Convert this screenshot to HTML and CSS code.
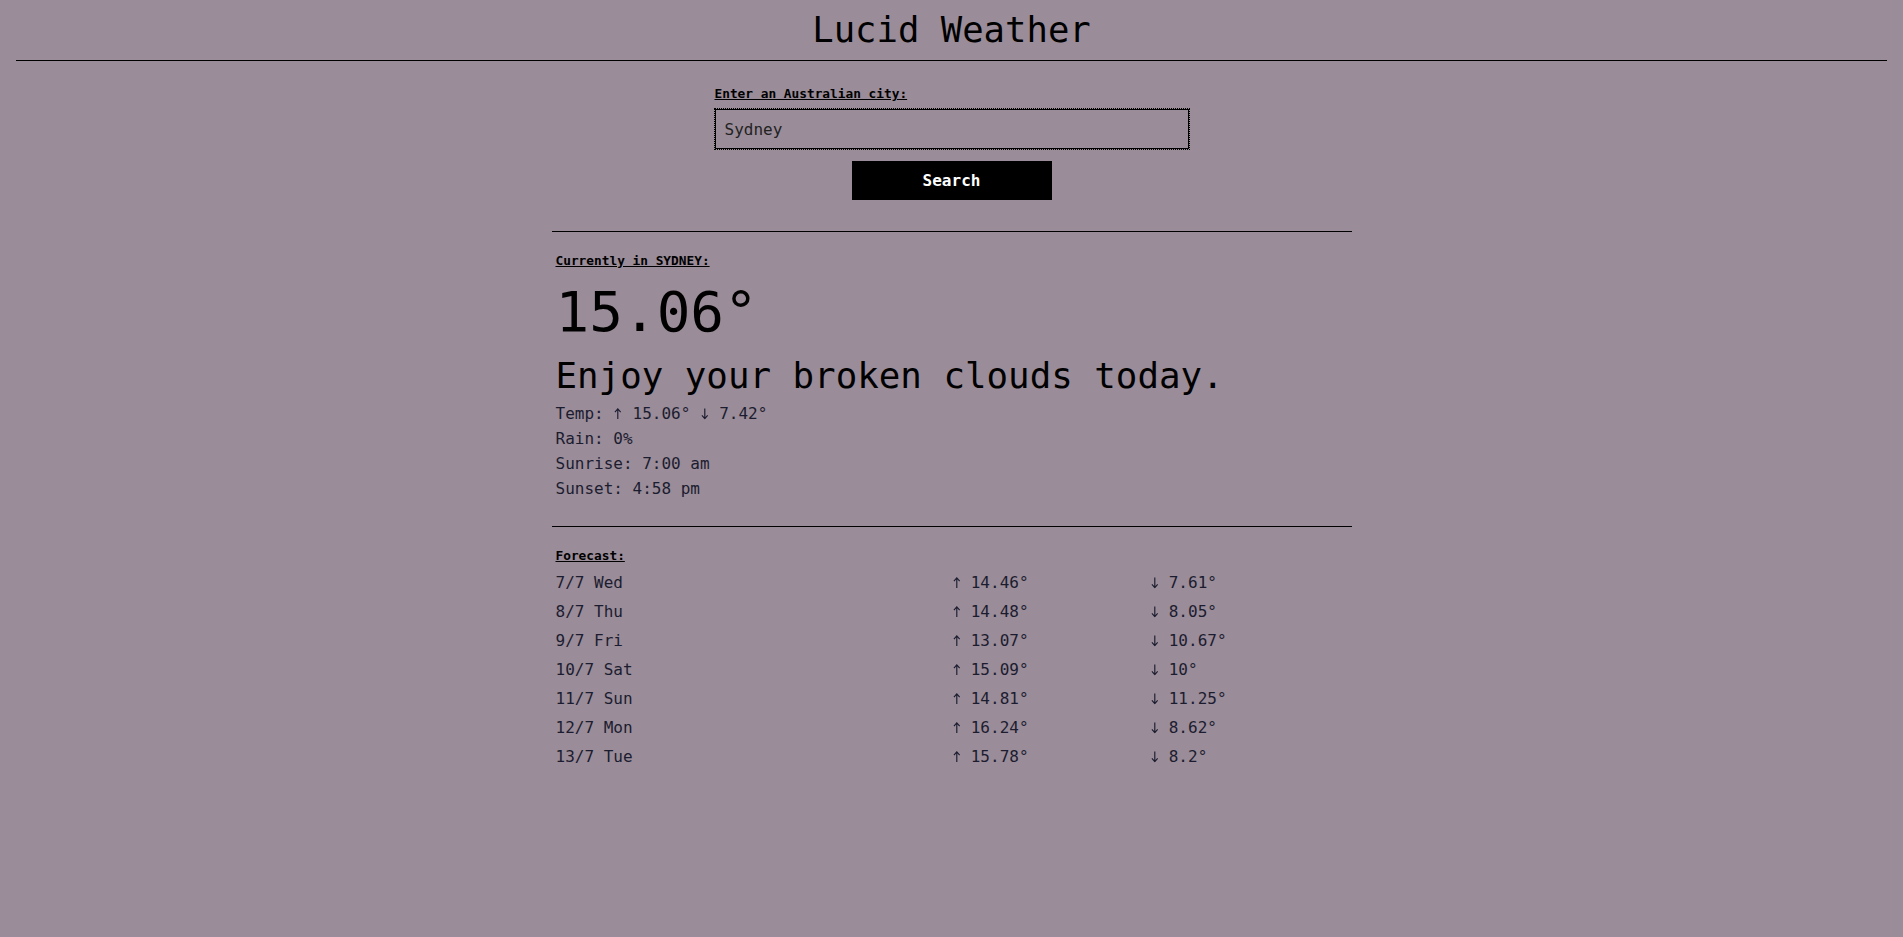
FILE: index.html
```html
<!DOCTYPE html>
<html lang="en">
<head>
<meta charset="utf-8">
<title>Lucid Weather</title>
<link rel="stylesheet" href="styles.css">
</head>
<body>
<svg class="defs" width="0" height="0" aria-hidden="true">
  <defs>
    <symbol id="up" viewBox="0 0 10 12"><path d="M5 11.5V1M2 4.2L5 1L8 4.2" fill="none" stroke="currentColor" stroke-width="1.2"/></symbol>
    <symbol id="down" viewBox="0 0 10 12"><path d="M5 0.5V11M2 7.8L5 11L8 7.8" fill="none" stroke="currentColor" stroke-width="1.2"/></symbol>
  </defs>
</svg>
<header class="site-header">
  <h1 class="site-title">Lucid Weather</h1>
</header>
<main class="page">
  <form class="search-form">
    <label class="field-label" for="city">Enter an Australian city:</label>
    <input class="city-input" id="city" type="text" value="Sydney">
    <button class="search-button" type="button">Search</button>
  </form>

  <section class="panel current">
    <h2 class="panel-label">Currently in SYDNEY:</h2>
    <div class="current-temp">15.06°</div>
    <p class="summary">Enjoy your broken clouds today.</p>
    <ul class="details">
      <li>Temp: <svg class="arrow"><use href="#up"/></svg> 15.06° <svg class="arrow"><use href="#down"/></svg> 7.42°</li>
      <li>Rain: 0%</li>
      <li>Sunrise: 7:00 am</li>
      <li>Sunset: 4:58 pm</li>
    </ul>
  </section>

  <section class="panel forecast">
    <h2 class="panel-label">Forecast:</h2>
    <div class="forecast-list">
      <div class="forecast-row"><span>7/7 Wed</span><span><svg class="arrow"><use href="#up"/></svg> 14.46°</span><span><svg class="arrow"><use href="#down"/></svg> 7.61°</span></div>
      <div class="forecast-row"><span>8/7 Thu</span><span><svg class="arrow"><use href="#up"/></svg> 14.48°</span><span><svg class="arrow"><use href="#down"/></svg> 8.05°</span></div>
      <div class="forecast-row"><span>9/7 Fri</span><span><svg class="arrow"><use href="#up"/></svg> 13.07°</span><span><svg class="arrow"><use href="#down"/></svg> 10.67°</span></div>
      <div class="forecast-row"><span>10/7 Sat</span><span><svg class="arrow"><use href="#up"/></svg> 15.09°</span><span><svg class="arrow"><use href="#down"/></svg> 10°</span></div>
      <div class="forecast-row"><span>11/7 Sun</span><span><svg class="arrow"><use href="#up"/></svg> 14.81°</span><span><svg class="arrow"><use href="#down"/></svg> 11.25°</span></div>
      <div class="forecast-row"><span>12/7 Mon</span><span><svg class="arrow"><use href="#up"/></svg> 16.24°</span><span><svg class="arrow"><use href="#down"/></svg> 8.62°</span></div>
      <div class="forecast-row"><span>13/7 Tue</span><span><svg class="arrow"><use href="#up"/></svg> 15.78°</span><span><svg class="arrow"><use href="#down"/></svg> 8.2°</span></div>
    </div>
  </section>
</main>
</body>
</html>
```

FILE: styles.css
```css
html, body {
  margin: 0;
  padding: 0;
}

body {
  background: #9a8c98;
  color: #1c1c30;
  font-family: "DejaVu Sans Mono", "Liberation Mono", monospace;
  font-size: 16px;
  min-height: 937px;
}

.defs {
  position: absolute;
  width: 0;
  height: 0;
  overflow: hidden;
}

.site-header {
  margin: 0 16px;
  padding: 8px 0 8px;
  border-bottom: 1px solid #000;
}

.site-title {
  margin: 0;
  font-size: 35.6px;
  line-height: 44px;
  font-weight: normal;
  text-align: center;
  color: #000;
}

.page {
  display: flex;
  flex-direction: column;
  align-items: center;
}

.search-form {
  width: 474px;
  margin-top: 25px;
  display: flex;
  flex-direction: column;
  align-items: stretch;
}

.field-label {
  font-size: 12.8px;
  line-height: 16px;
  font-weight: bold;
  text-decoration: underline;
  color: #000;
}

.city-input {
  margin-top: 7px;
  height: 40px;
  box-sizing: border-box;
  border: 1px solid #000;
  outline: 1px dotted #000;
  outline-offset: 0;
  background: transparent;
  padding: 0 9px;
  font-family: inherit;
  font-size: 16px;
  color: #222;
}

.search-button {
  align-self: center;
  margin-top: 12px;
  width: 200px;
  height: 39px;
  border: none;
  background: #000;
  color: #fff;
  font-family: inherit;
  font-size: 16px;
  font-weight: bold;
}

.panel {
  width: 800px;
  box-sizing: border-box;
  border-top: 1px solid #000;
  padding: 21px 4px 0;
}

.current {
  margin-top: 31px;
  padding-bottom: 25px;
}

.panel-label {
  margin: 0;
  font-size: 12.8px;
  line-height: 16px;
  font-weight: bold;
  text-decoration: underline;
  color: #000;
}

.current-temp {
  margin-top: 11px;
  font-size: 56px;
  line-height: 64px;
  color: #000;
}

.summary {
  margin: 10px 0 0;
  font-size: 35.8px;
  line-height: 44px;
  color: #000;
}

.details {
  list-style: none;
  margin: 3px 0 0;
  padding: 0;
  line-height: 25px;
}

.arrow {
  width: 9.6px;
  height: 11.5px;
  vertical-align: -0.5px;
}

.forecast-list {
  margin-top: 4px;
  display: flex;
  flex-direction: column;
}

.forecast-row {
  display: grid;
  grid-template-columns: 396px 198px 1fr;
  line-height: 29px;
}
```
